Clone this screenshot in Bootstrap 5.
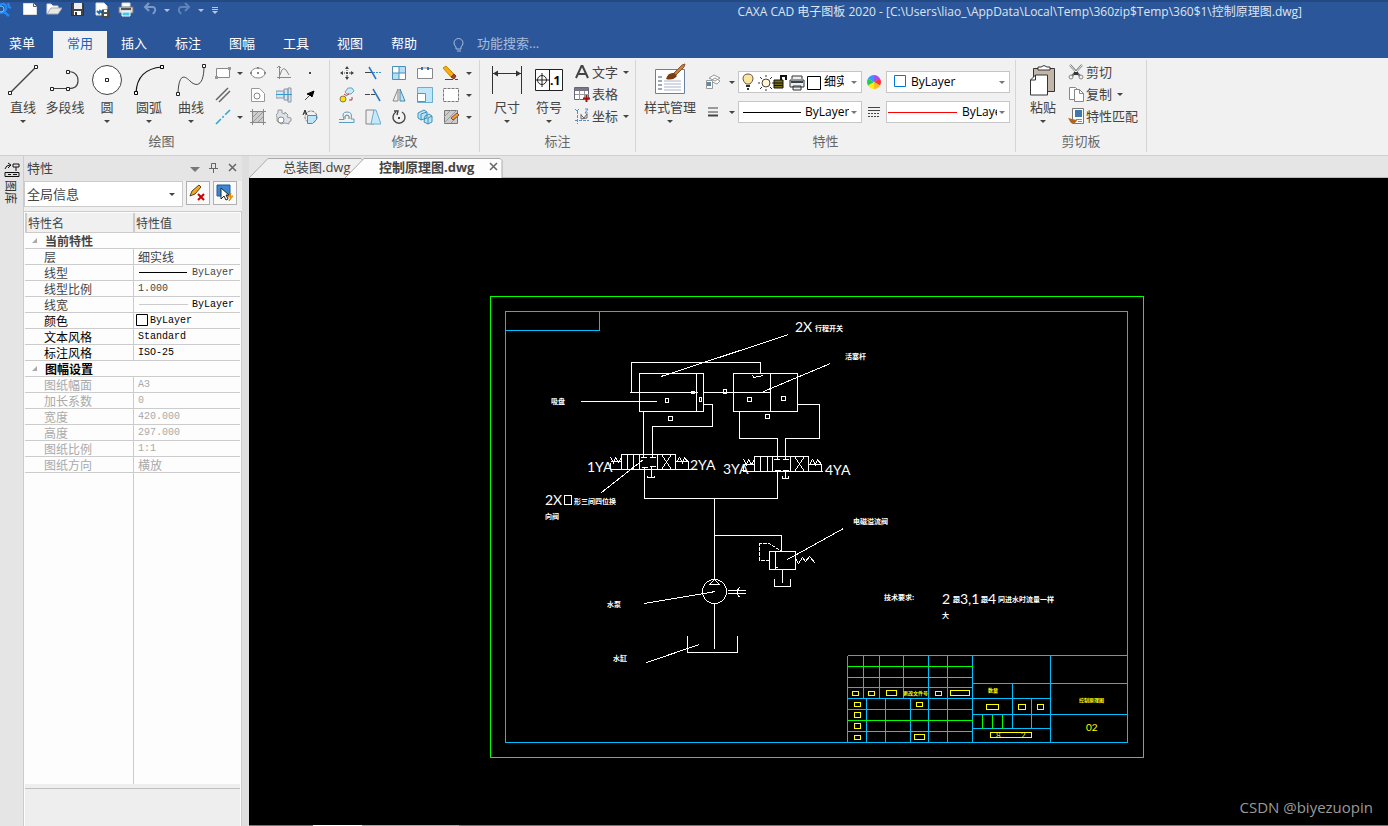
<!DOCTYPE html>
<html lang="zh-CN">
<head>
<meta charset="utf-8">
<meta name="viewport" content="width=device-width, initial-scale=1">
<title>CAXA CAD 电子图板 2020</title>
<link href="https://cdn.jsdelivr.net/npm/bootstrap@5.3.0/dist/css/bootstrap.min.css" rel="stylesheet">
<style>
body{font-family:"Open Sans","Noto Sans CJK SC",sans-serif;font-size:13px;line-height:18px;color:#444;background:#e5e5e5}
button{border:0;background:none;padding:0;color:inherit;line-height:inherit}
svg{display:block;flex:none;fill:none;stroke:#444;stroke-width:1}
.hdr{background:#2b579a;color:#fff;border-top:2px solid #244a84}
.titlebar{height:29px;padding-top:0}
.titlebar .tb{width:24px;height:16px;display:flex;justify-content:center}
.titlebar .tc{width:10px;height:16px;display:flex;justify-content:center;align-items:center}
.doc-title{font-size:12px;color:#dde5f1;margin-right:86px;height:20px;line-height:20px}
.menu-tabs{height:27px}
.menu-tabs button{width:54px;height:27px;padding-bottom:4px;line-height:20px}
.menu-tabs .first{width:44px;margin-right:9px}
.menu-tabs .on{background:#f1f1f1;color:#1565c0}
.menu-tabs .bulb{margin:0 12px 0 22px}
.search-box{background:none;border:0;color:#b9c8e0;width:140px;height:27px;padding:0 0 4px;outline:0}
.search-box::placeholder{color:#a9bbd8;opacity:1}
.ribbon{background:#f1f1f1;border-bottom:1px solid #d0d0d0;padding-top:2px;height:98px}
.grp{border-right:1px solid #d6d6d6;height:92px}
.grp-body{height:69px;padding-top:2px}
.grp-name{color:#666;text-align:center;line-height:24px}
.big{width:42px;height:66px;display:flex;flex-direction:column;align-items:center}
.big .ic{height:36px;display:flex;align-items:center}
.big .lb{line-height:18px;white-space:nowrap}
.big .car{margin-top:4px}
.car{width:0;height:0;border:3px solid transparent;border-top-color:#444;border-bottom:0;display:block;flex:none}
.grid-draw{display:grid;grid-template-columns:22px 11px 26px 26px 26px;grid-auto-rows:22px;place-items:center}
.grid-mod{display:grid;grid-template-columns:repeat(5,26px) 9px;grid-auto-rows:22px;place-items:center}
.rowbtn{height:22px;display:flex;align-items:center;white-space:nowrap;line-height:18px;padding-bottom:2px}
.rowbtn svg{margin-right:2px}
.rowbtn .car{margin-left:5px}
.prop-grid{display:grid;grid-template-columns:26px 12px 124px 24px 124px;grid-auto-rows:22px;row-gap:8px;align-items:center;justify-items:center;align-content:start;padding-top:9px}
.combo{width:124px;height:22px;background:#fff;border:1px solid #c6c6c6;display:flex;align-items:center;overflow:hidden}
.combo select,.scope select{appearance:none;border:0;background:transparent;outline:0;color:#000;padding:0;font-size:12px;min-width:0;overflow:hidden;text-overflow:clip}
.combo .car{border-top-color:#777;margin:0 4px 0 2px}
.side-strip{width:23px}
.vert{writing-mode:vertical-rl;text-orientation:sideways;font-size:12px;line-height:14px;color:#333;margin-right:4px}
.pane{width:219px;border-left:1px solid #ccc}
.pane-head{height:25px;padding:0 5px 2px 3px}
.scope-row{background:#f0f0f0;height:30px;gap:3px}
.scope{width:159px;height:26px;background:#fff;border:1px solid #ccc;display:flex;align-items:center}
.scope select{flex:1;font-size:13px;color:#444;padding-left:2px}
.sqbtn{width:24px;height:24px;border:1px solid #b0b0b0;background:#fafafa;display:flex;align-items:center;justify-content:center}
.sheet{background:#fdfdfd;border:1px solid #ccc;border-left:0;border-bottom:0;padding:1px 1px 0 1px}
.props{width:100%;table-layout:fixed;border-collapse:separate;border-spacing:0;font-family:"Noto Sans CJK SC",sans-serif;font-size:12px;line-height:15px}
.props td,.props th{padding:0;height:16px;border-bottom:1px solid #ccc;white-space:nowrap;font-weight:400}
.props th{height:20px;background:#f0f0f0;border-left:2px solid #ccc;padding-left:1px}
.props td:first-child{padding-left:19px}
.props td:nth-child(2){border-left:1px solid #ccc;padding-left:4px}
.props .sect{font-weight:700;padding-left:7px!important}
.props .sect span{display:flex;align-items:center;gap:8px}
.props .blk{color:#000}
.props .dim{color:#aaa}
.props code{font-family:"Liberation Mono",monospace;font-size:10px;color:inherit}
.props .val{display:flex;align-items:center;height:15px}
.rest{border-left:1px solid #ccc;margin-left:108px}
.pane-foot{height:42px;background:#eee;border-top:4px solid #eee}
.pane-foot div{border-top:1px solid #c0c0c0}
.gutter{width:7px;background:#dedede}
.doc-tabs{height:22px;border-bottom:1px solid #bbb}
.dtab{position:relative;height:20px;margin-top:2px;line-height:18px;padding-bottom:2px;z-index:1;text-align:left}
.dtab .shape{position:absolute;inset:0;width:100%;height:100%;z-index:-1;stroke:#aaa}
.dtab-a{width:114px;padding-left:34px}
.dtab-b{width:158px;padding-left:34px;margin-left:-18px;z-index:2;font-weight:700}
.canvas{background:#000;position:relative}
.canvas svg{width:100%;height:100%}
.wm{position:absolute;right:15px;bottom:8px;color:#9a9a9a;font-size:15px;line-height:20px}
.base-line{height:1px;background:#777}
.base-line i{display:block;height:1px}
.cad{font-family:Lato,"Noto Sans CJK SC",sans-serif;font-size:14px;fill:#fff;stroke:none}
.cad .cn{font-family:"Noto Sans CJK SC",sans-serif;font-size:7px;font-weight:700}
.cad .ylw{fill:#ff0;font-family:"Noto Sans CJK SC",sans-serif;font-size:5px;font-weight:700}
.cad .num{fill:#ff0;font-size:10px}
.cad .tiny{font-size:8px}
</style>
<script src="https://cdn.jsdelivr.net/npm/bootstrap@5.3.0/dist/js/bootstrap.bundle.min.js"></script>
</head>
<body class="vh-100 d-flex flex-column overflow-hidden">
<header class="hdr">
  <div class="titlebar d-flex">
    <svg width="18" height="16"><path d="M0 3q5-3 6 2t-6 6M3 9l6 5M8 1l1 4 2 1" stroke="#2089f5" stroke-width="2.500"/><circle cx="1" cy="7" r="3" stroke="#7cc2ff"/></svg>
    <button class="tb" aria-label="新建"><svg width="16" height="16"><path d="M1.500 1.500h10l3 3v8h-13z" fill="#fff" stroke="#ddd"/><path d="M11.500 1.500v3h3" stroke="#555"/></svg></button>
    <button class="tb" aria-label="打开"><svg width="16" height="16"><path d="M1 12V2h4l2 2h5v2" fill="#fff" stroke="#ddd"/><path d="M1 12l4-6h11l-4 6z" fill="#e8e8e8" stroke="#aaa"/></svg></button>
    <button class="tb" aria-label="保存"><svg width="16" height="16"><path d="M1.500 1.500h12v12h-12z" fill="#444" stroke="#333"/><path d="M4 1h8v6H4z" fill="#eee" stroke="none"/><path d="M4 9h7v4H4z" fill="#fff" stroke="none"/><path d="M5 10h2v3H5z" fill="#333" stroke="none"/></svg></button>
    <button class="tb" aria-label="另存为"><svg width="16" height="16"><path d="M2 1h8l3 3v9H2z" fill="#fff" stroke="#ddd"/><path d="M3 9l2 2 1-2 2 2" stroke="#1470bd" stroke-width="2"/><path d="M8 8h7v7H8z" fill="#555"/><path d="M10 8h3v2h-3zM10 12h3v2h-3z" fill="#fff" stroke="none"/></svg></button>
    <button class="tb" aria-label="打印"><svg width="16" height="16"><path d="M4 5V1h8v4" fill="#fff" stroke="#ddd"/><path d="M1 5h14v6H1z" fill="#ddd" stroke="#777"/><path d="M3 6h10v2H3z" fill="#555" stroke="none"/><path d="M4 10h8v4H4z" fill="#45c9e8" stroke="#fff"/></svg></button>
    <button class="tb" aria-label="撤销"><svg width="16" height="16"><path d="M3 5h7q4 0 3 4l-2 3M7 1L3 5l4 4" stroke="#7d9ac6" stroke-width="2"/></svg></button>
    <button class="tc" aria-label="撤销列表"><i class="car" style="border-top-color:#b5c4dc"></i></button>
    <button class="tb" aria-label="重做"><svg width="16" height="16"><path d="M13 5H6Q2 5 3 9l2 3M9 1l4 4-4 4" stroke="#6183b8" stroke-width="2"/></svg></button>
    <button class="tc" aria-label="重做列表"><i class="car" style="border-top-color:#b5c4dc"></i></button>
    <button class="tc ms-1" aria-label="自定义快速访问"><svg width="8" height="16"><path d="M1 5.500h6M1 7.500h6" stroke="#c5c5c5"/><path d="M1 9h6l-3 3z" fill="#c5c5c5" stroke="none"/></svg></button>
    <div class="doc-title ms-auto text-nowrap">CAXA CAD 电子图板 2020 - [C:\Users\liao_\AppData\Local\Temp\360zip$Temp\360$1\控制原理图.dwg]</div>
  </div>
  <nav class="menu-tabs d-flex align-items-center">
    <button class="first">菜单</button><button class="on">常用</button><button>插入</button><button>标注</button><button>图幅</button><button>工具</button><button>视图</button><button>帮助</button>
    <svg class="bulb" width="12" height="16"><path d="M3 10Q1 8 1 6a4 4 0 0 1 9 0q0 2-2 4v2H3zM4 14h4" stroke="#a9bbd8"/></svg>
    <input class="search-box" type="text" placeholder="功能搜索..." aria-label="功能搜索">
  </nav>
</header>

<div class="ribbon d-flex">
  <section class="grp" style="width:330px">
    <div class="grp-body d-flex" style="padding-left:2px">
      <button class="big"><span class="ic"><svg width="32" height="34"><path d="M3 30L29 4" stroke-width="1.500"/><path d="M1.500 28.500h3v3h-3zM27.500 2.500h3v3h-3z" fill="#fff" stroke="#222"/></svg></span><span class="lb">直线</span><i class="car"></i></button>
      <button class="big"><span class="ic"><svg width="32" height="34"><path d="M4 25.500h14M18 8.500q11 0 11 9t-11 8" stroke-width="1.200"/><path d="M1.500 24.500h3v3h-3zM17.500 24.500h3v3h-3zM17.500 7.500h3v3h-3z" fill="#fff" stroke="#222"/></svg></span><span class="lb">多段线</span></button>
      <button class="big"><span class="ic"><svg width="32" height="34"><circle cx="16" cy="17" r="14.500" fill="#fff"/><path d="M14.500 15.500h3v3h-3z" stroke="#222"/></svg></span><span class="lb">圆</span><i class="car"></i></button>
      <button class="big"><span class="ic"><svg width="32" height="34"><path d="M3 30Q4 6 29 4" stroke="#111" stroke-width="1.200"/><path d="M1.500 28.500h3v3h-3zM27.500 2.500h3v3h-3z" fill="#fff" stroke="#000"/></svg></span><span class="lb">圆弧</span><i class="car"></i></button>
      <button class="big"><span class="ic"><svg width="32" height="34"><path d="M3 30C4 8 11 14 15 18c7 7 14 4 14-15"/><path d="M1.500 29.500h3v3h-3zM27.500 1.500h3v3h-3z" fill="#fff" stroke="#222"/></svg></span><span class="lb">曲线</span><i class="car"></i></button>
      <div class="grid-draw">
        <button aria-label="矩形"><svg width="16" height="16"><path d="M1.500 3.500h13v9h-13z" fill="#fff" stroke="#888"/><path d="M0 11h3v3H0zM13 2h3v3h-3z" fill="#999" stroke="none"/></svg></button><i class="car"></i>
        <button aria-label="椭圆"><svg width="16" height="16"><ellipse cx="8" cy="8" rx="7" ry="5" fill="#fff" stroke="#888"/><path d="M7 2h2v2H7zM0 7h2v2H0zM14 7h2v2h-2zM7 7h2v2H7z" fill="#888" stroke="none"/></svg></button>
        <button aria-label="公式曲线"><svg width="16" height="16"><path d="M3.500 1v13M1 12.500h14M4 10q3-13 9 0M1 3l2-2 2 2" stroke="#888"/></svg></button>
        <button aria-label="点"><svg width="16" height="16"><path d="M7 7h2v2H7z" fill="#445" stroke="none"/></svg></button>
        <button aria-label="平行线"><svg width="16" height="16"><path d="M1 13L13 1M4 15L15 4" stroke="#666" stroke-width="1.500"/></svg></button><i></i>
        <button aria-label="孔"><svg width="16" height="16"><path d="M1.500 1.500h8l5 5v8h-13z" fill="#fff" stroke="#999"/><circle cx="7" cy="9" r="3" stroke="#888"/></svg></button>
        <button aria-label="轴"><svg width="16" height="16"><path d="M0 4h8v7H0zM8 2h4v11H8zM12 1h3v14h-3z" fill="#cfe6f8" stroke="#8a96a4"/><path d="M0 7.500h16" stroke="#39c"/></svg></button>
        <button aria-label="箭头"><svg width="16" height="16"><path d="M3 13l5-5"/><path d="M12 4l-2 6-2-2-3-1z" fill="#000" stroke="#000"/></svg></button>
        <button aria-label="中心线"><svg width="16" height="16"><path d="M1 15L15 1" stroke="#26a6d8" stroke-width="1.500" stroke-dasharray="7 2 2 2"/></svg></button><i class="car"></i>
        <button aria-label="剖面线"><svg width="16" height="16"><path d="M3 3h10v10H3z" fill="#ccc" stroke="none"/><path d="M2.500 0v16M13.500 0v16M0 2.500h16M0 13.500h16" stroke="#888"/><path d="M3 8l5-5M3 13L13 3M8 13l5-5" stroke="#999"/></svg></button>
        <button aria-label="齿轮"><svg width="16" height="16"><path d="M2 1h4v3l3 1V3l3 3-1 2 4 1v3l-2 1v2l-4-1-4 1-4-3V8L0 6l2-2z" fill="#dce2ea" stroke="#999"/><circle cx="5" cy="11" r="3" fill="#fff" stroke="#888"/></svg></button>
        <button aria-label="局部放大"><svg width="16" height="16"><circle cx="9" cy="8" r="6" stroke="#777" stroke-dasharray="3 1"/><path d="M5.500 6.500h9v4l-4 4h-5z" fill="#bde4f7" stroke="#58a"/><path d="M1 6l2-5 2 5M2 4h2" stroke="#222"/></svg></button>
      </div>
    </div>
    <div class="grp-name" style="margin-right:6px">绘图</div>
  </section>

  <section class="grp" style="width:150px">
    <div class="grp-body ps-1">
      <div class="grid-mod">
        <button aria-label="平移"><svg width="16" height="16"><path d="M8 2v4M8 10v4M2 8h4M10 8h4" stroke-dasharray="2 1"/><path d="M8 1l2 3H6zM8 15l2-3H6zM1 8l3-2v4zM15 8l-3-2v4zM7 7h2v2H7z" fill="#444" stroke="none"/></svg></button>
        <button aria-label="裁剪"><svg width="16" height="16"><path d="M0 7.500h7" /><path d="M8 7.500h8" stroke="#3d8fd1" stroke-dasharray="2 1"/><path d="M4 2l7 12" stroke="#2477c9" stroke-width="1.500"/></svg></button>
        <button aria-label="阵列"><svg width="16" height="16"><path d="M1.500 1.500h13v13h-13z" fill="#fff" stroke="#4b8fb5"/><path d="M8 2h6v6H8zM2 8h6v6H2z" fill="#b4dff5" stroke="none"/><path d="M8 1v14M1 8h14" stroke="#4b8fb5"/></svg></button>
        <button aria-label="打断"><svg width="16" height="16"><path d="M4 3.500H.500v10h15v-10H12M6 3h4" stroke="#888" fill="#fff"/><path d="M5 2v3M11 2v3" stroke="#2477c9" stroke-width="2"/></svg></button>
        <button aria-label="删除"><svg width="16" height="16"><path d="M0 3l3-2 8 8-3 3z" fill="#f5aa18" stroke="#c80"/><path d="M8 12l3-3 2 2-2 3z" fill="#a42" stroke="#733"/><path d="M2 14.500h13" stroke="#922" stroke-dasharray="8 2"/></svg></button><i class="car"></i>
        <button aria-label="平移复制"><svg width="16" height="16"><circle cx="4" cy="12" r="3" fill="#fbe000" stroke="#875"/><path d="M6 5l3-4h4l2 3-3 3H8z" fill="#cae8f8" stroke="#6aa3c0"/><path d="M5 7q2 3 5 0M10 13h3v-3" stroke="#b33"/></svg></button>
        <button aria-label="延伸"><svg width="16" height="16"><path d="M0 7.500h10" stroke-dasharray="5 1"/><path d="M8 2l7 12" stroke="#2477c9" stroke-width="1.500"/></svg></button>
        <button aria-label="镜像"><svg width="16" height="16"><path d="M7 2v12H2z" fill="#eee" stroke="#888"/><path d="M9 2v12h5z" fill="#bfe3f7" stroke="#48a"/></svg></button>
        <button aria-label="缩放"><svg width="16" height="16"><path d="M.500.500h15v15H.500z" fill="#bfe6fa" stroke="#6aafcf"/><path d="M.500 6.500h8v8h-8z" fill="#fff" stroke="#888"/></svg></button>
        <button aria-label="拉伸"><svg width="16" height="16"><path d="M.500 1.500h15v13H.500z" fill="#fff" stroke="#777" stroke-dasharray="3 1"/></svg></button><i class="car"></i>
        <button aria-label="偏移"><svg width="16" height="16"><path d="M0 10.500h5Q2 3 8 3t4 7h3M0 13.500h15V10" stroke="#5a9cc0"/><path d="M6 10Q5 6 8 6t2 4" stroke="#777"/></svg></button>
        <button aria-label="倾斜"><svg width="16" height="16"><path d="M1 1h8v14H1z" fill="#eee" stroke="#888"/><path d="M9 1h2l5 14H6z" fill="#c5e8fa" stroke="#6aafcf"/></svg></button>
        <button aria-label="旋转"><svg width="16" height="16"><path d="M11 3a6 6 0 1 1-6 0M3 2l4 0-1 4" stroke-width="1.400"/><path d="M7 8h2v2H7z" fill="#444" stroke="none"/></svg></button>
        <button aria-label="分解"><svg width="16" height="16"><path d="M1 4l6-3 3 2v6l-6 2-3-2zM8 7l4-2 3 2v6l-4 2-4-2z" fill="#b9e4f8" stroke="#3f8fb8"/><path d="M4 11V5l6-2M11 15V9l4-2" stroke="#3f8fb8"/></svg></button>
        <button aria-label="编辑填充"><svg width="16" height="16"><path d="M1.500 1.500h13v13h-13z" fill="#ccc" stroke="#777"/><path d="M1 8l7-7M1 14L14 1M8 14l6-6" stroke="#999"/><path d="M8 9l6-5 2 2-6 5z" fill="#eca52b" stroke="#944"/></svg></button><i class="car"></i>
      </div>
    </div>
    <div class="grp-name">修改</div>
  </section>

  <section class="grp" style="width:156px">
    <div class="grp-body d-flex" style="padding-left:6px">
      <button class="big"><span class="ic"><svg width="32" height="34"><path d="M1.500 3v28M30.500 3v28M2 10.500h28" stroke="#333"/><path d="M2 10.500l5-3v6zM30 10.500l-5-3v6z" fill="#333" stroke="none"/></svg></span><span class="lb">尺寸</span><i class="car"></i></button>
      <button class="big"><span class="ic"><svg width="30" height="34"><path d="M1.500 6.500h27v21h-27zM15.500 6v22" fill="#fff" stroke="#222"/><circle cx="8" cy="17" r="4.500" stroke="#222"/><path d="M8 10v14M2 17h13" stroke="#222"/><text x="16" y="22" font-size="12" font-weight="700" fill="#000" stroke="none">.1</text></svg></span><span class="lb">符号</span><i class="car"></i></button>
      <div class="ps-1">
        <button class="rowbtn"><svg width="16" height="16"><path d="M2 14L7.500 2h1L14 14M4 10h8" stroke="#444" stroke-width="2"/></svg>文字<i class="car"></i></button>
        <button class="rowbtn"><svg width="16" height="16"><path d="M.500 1.500h14v12H.500z" fill="#fff" stroke="#667"/><path d="M1 2h13v3H1z" fill="#778" stroke="none"/><path d="M1 8.500h14M5.500 5v9M10.500 5v9" stroke="#999"/><path d="M12.500 9v7M9 12.500h7" stroke="#a11" stroke-width="2"/></svg>表格</button>
        <button class="rowbtn"><svg width="16" height="16"><path d="M3.500 3v13M1 12.500h14" stroke="#5a8fc0" stroke-dasharray="3 1"/><path d="M1 1l2 2 2-2M11 1h3l-3 4h3" stroke="#5a8fc0"/><path d="M7 6v5l6-1V6M7 7l3 3 3-4" stroke="#666"/></svg>坐标<i class="car"></i></button>
      </div>
    </div>
    <div class="grp-name">标注</div>
  </section>

  <section class="grp" style="width:380px">
    <div class="grp-body d-flex ps-1">
      <button class="big" style="width:60px"><span class="ic"><svg width="32" height="34"><path d="M1.500 6.500h29v24h-29z" fill="#fff" stroke="#68829c"/><path d="M4 14h4M4 18h4M4 22h4M4 26h4" stroke="#357"/><path d="M10 18h17M10 21h17M10 24h17M10 27h17" stroke="#aab4c8"/><path d="M12 16q2-7 8-6l3 3q-4 5-11 3z" fill="#7b3d12" stroke="none"/><path d="M20 10l8-8 3-1-1 3-8 8z" fill="#c98235" stroke="#853"/></svg></span><span class="lb">样式管理</span><i class="car"></i></button>
      <div class="prop-grid">
        <button aria-label="图层"><svg width="16" height="16"><path d="M4 4l5-3 6 3-5 3zM5 7l5-3 5 3-3 3z" fill="#fff" stroke="#999"/><path d="M1.500 6.500h6v8h-6z" fill="#fff" stroke="#999"/><path d="M2 8h4v4H2z" fill="#5b8aaa" stroke="none"/></svg></button><i class="car"></i>
        <div class="combo">
          <svg width="94" height="20"><path d="M7 12q-3-3-3-5 0-5 5-5t5 5q0 2-3 5z" fill="#fbe69c" stroke="#655"/><path d="M7 14h4M8 17h2" stroke="#333" stroke-width="2"/><circle cx="27" cy="11" r="4" fill="#fff6d0"/><path d="M27 3v2M27 17v2M19 11h2M33 11h2M21 5l2 2M33 5l-2 2M21 17l2-2M33 17l-2-2" stroke="#333"/><path d="M35 8h9v8h-9zM35 11h9M35 13.500h9" fill="#777010" stroke="#111"/><path d="M42 8V4h5v4" stroke="#111" stroke-width="2"/><path d="M53 7V4h10v3M51 8h14v7H51zM54 14h8v4h-8z" fill="#eee" stroke="#333"/><path d="M52 10h12" stroke="#345" stroke-width="2"/><path d="M68.500 4.500h13v13h-13z" fill="#fff" stroke="#000"/></svg>
          <select class="flex-fill" aria-label="图层选择" style="margin-left:-9px;width:20px"><option>细实线</option></select><i class="car" style="margin-left:7px"></i>
        </div>
        <button aria-label="颜色"><svg width="16" height="16" style="stroke:none"><path d="M8 8V1a7 7 0 0 1 6 4z" fill="#a050f0"/><path d="M8 8l6-3.500a7 7 0 0 1 0 7z" fill="#f33"/><path d="M8 8l6 3.500A7 7 0 0 1 8 15z" fill="#fb2"/><path d="M8 8v7a7 7 0 0 1-6-3.500z" fill="#fe0"/><path d="M8 8l-6 3.500a7 7 0 0 1 0-7z" fill="#2c5"/><path d="M8 8L2 4.500A7 7 0 0 1 8 1z" fill="#39f"/></svg></button>
        <div class="combo"><svg class="ms-1" width="20" height="16"><path d="M3.500 1.500h11v11h-11z" fill="#fff" stroke="#0078d7"/></svg><select class="flex-fill" aria-label="颜色选择"><option>ByLayer</option></select><i class="car"></i></div>
        <button aria-label="线型"><svg width="12" height="12"><path d="M1 2h10M1 6h10" stroke-width="1"/><path d="M1 9.500h10" stroke-width="2"/></svg></button><i class="car"></i>
        <div class="combo"><svg class="ms-1 me-1" width="58" height="4"><path d="M0 2.500h58" stroke="#000"/></svg><select class="flex-fill" aria-label="线型选择"><option>ByLayer</option></select><i class="car"></i></div>
        <button aria-label="线宽"><svg width="14" height="14"><path d="M1 2.500h12M1 5.500h12" /><path d="M1 8.500h12M1 11.500h12" stroke-dasharray="2 1"/></svg></button>
        <div class="combo"><svg class="me-1" width="71" height="4"><path d="M1 2.500h69" stroke="red"/></svg><select class="flex-fill" aria-label="线宽选择"><option>ByLayer</option></select><i class="car"></i></div>
      </div>
    </div>
    <div class="grp-name">特性</div>
  </section>

  <section class="grp" style="width:131px">
    <div class="grp-body d-flex" style="padding-left:6px">
      <button class="big"><span class="ic"><svg width="30" height="34"><path d="M5.500 5.500h21v23h-21z" fill="#c2b6a8" stroke="#333"/><path d="M10 7V4h3q3-3 6 0h3v3z" fill="#fff" stroke="#333"/><path d="M2.500 17l5-5h12v20h-17z" fill="#fff" stroke="#333"/><path d="M2.500 17h5v-5" stroke="#333"/></svg></span><span class="lb">粘贴</span><i class="car"></i></button>
      <div class="ps-1">
        <button class="rowbtn"><svg width="16" height="16"><path d="M2 1l10 11M14 1L4 12" stroke="#666" stroke-width="2"/><path d="M2 1l6 7M14 1L8 8" stroke="#fff"/><circle cx="3" cy="13" r="2" stroke="#888"/><circle cx="13" cy="13" r="2" stroke="#888"/><path d="M6 8h4v3H6z" fill="#333" stroke="none"/></svg>剪切</button>
        <button class="rowbtn"><svg width="16" height="16"><path d="M1.500 1.500h6l2 2v10h-8z" fill="#fff" stroke="#888"/><path d="M6.500 3.500h5l4 4v8h-9z" fill="#fff" stroke="#888"/><path d="M11.500 3.500v4h4" stroke="#888"/></svg>复制<i class="car"></i></button>
        <button class="rowbtn"><svg width="16" height="16"><path d="M4.500.500h11v15h-11z" fill="#fff" stroke="#777"/><path d="M7 2h7v7H7z" fill="#3f78ad" stroke="none"/><path d="M8 11.500h6M10 13.500h4" stroke="#888"/><path d="M0 10l4 1 5 1q-1 4-6 3z" fill="#b4651c" stroke="none"/></svg>特性匹配</button>
      </div>
    </div>
    <div class="grp-name">剪切板</div>
  </section>
</div>

<main class="d-flex flex-fill" style="min-height:0">
  <div class="side-strip pt-1 d-flex flex-column align-items-center">
    <svg width="16" height="20"><path d="M1 9q1-4 5-4M4 3l3 2-3 3M9 4h6v3H9zM12 7v4" stroke="#111"/><path d="M1 12.500h14v4H1z" fill="#ddd" stroke="#111"/><path d="M4 14.500h3M9 14.500h4" stroke="#111"/></svg>
    <button class="vert">图库</button>
  </div>
  <aside class="pane d-flex flex-column">
    <div class="pane-head d-flex align-items-center"><span class="me-auto">特性</span>
      <button aria-label="窗格菜单" class="me-2"><svg width="10" height="10"><path d="M0 4h10L5 9z" fill="#777" stroke="none"/></svg></button>
      <button aria-label="固定" class="me-2"><svg width="12" height="12"><path d="M3.500 6V1.500h4V6M1 6.500h9M5.500 7v4M7.500 1v5" stroke="#666"/></svg></button>
      <button aria-label="关闭窗格"><svg width="9" height="9"><path d="M1 1l7 7M8 1L1 8" stroke="#666" stroke-width="1.500"/></svg></button>
    </div>
    <div class="scope-row d-flex">
      <div class="scope"><select aria-label="选择对象"><option>全局信息</option></select><i class="car" style="margin-right:7px"></i></div>
      <button class="sqbtn" aria-label="清除选择"><svg width="18" height="18"><path d="M1 12l2-5 7-6 2 2-6 7z" fill="#f2ab25" stroke="#542"/><path d="M9 10l6 6M15 10l-6 6" stroke="#c00" stroke-width="2"/></svg></button>
      <button class="sqbtn" aria-label="快速选择"><svg width="18" height="18"><path d="M1 1h13v11H1z" fill="#3c85cf" stroke="#1e5c9d"/><path d="M5 4v11l3-3 2 4 2-1-2-4h3z" fill="#fff" stroke="#222"/><path d="M15 9l-3 4h3l-2 4 4-5h-3z" fill="#fb2" stroke="#d80"/></svg></button>
    </div>
    <div class="sheet flex-fill d-flex flex-column">
      <table class="props">
        <colgroup><col style="width:108px"><col></colgroup>
        <thead><tr><th>特性名</th><th>特性值</th></tr></thead>
        <tbody>
          <tr><td class="sect" colspan="2"><span><svg width="5" height="5"><path d="M5 0v5H0z" fill="#aaa" stroke="none"/></svg>当前特性</span></td></tr>
          <tr><td>层</td><td>细实线</td></tr>
          <tr><td>线型</td><td><div class="val"><svg width="54" height="3"><path d="M1 1.500h48" stroke="#000"/></svg><code>ByLayer</code></div></td></tr>
          <tr><td>线型比例</td><td><div class="val"><code>1.000</code></div></td></tr>
          <tr><td>线宽</td><td><div class="val"><svg width="54" height="3"><path d="M1 1.500h49" stroke="#ccc"/></svg><code class="blk">ByLayer</code></div></td></tr>
          <tr class="blk"><td>颜色</td><td><div class="val"><svg style="margin-left:-2px" width="14" height="13"><path d="M.500.500h11v11H.500z" fill="#fff" stroke="#000"/></svg><code>ByLayer</code></div></td></tr>
          <tr class="blk"><td>文本风格</td><td><div class="val"><code>Standard</code></div></td></tr>
          <tr class="blk"><td>标注风格</td><td><div class="val"><code>ISO-25</code></div></td></tr>
          <tr class="blk"><td class="sect" colspan="2"><span><svg width="5" height="5"><path d="M5 0v5H0z" fill="#aaa" stroke="none"/></svg>图幅设置</span></td></tr>
          <tr class="dim"><td>图纸幅面</td><td><div class="val"><code>A3</code></div></td></tr>
          <tr class="dim"><td>加长系数</td><td><div class="val"><code>0</code></div></td></tr>
          <tr class="dim"><td>宽度</td><td><div class="val"><code>420.000</code></div></td></tr>
          <tr class="dim"><td>高度</td><td><div class="val"><code>297.000</code></div></td></tr>
          <tr class="dim"><td>图纸比例</td><td><div class="val"><code>1:1</code></div></td></tr>
          <tr class="dim"><td>图纸方向</td><td>横放</td></tr>
        </tbody>
      </table>
      <div class="rest flex-fill"></div>
      <div class="pane-foot"><div></div></div>
    </div>
  </aside>
  <div class="gutter"></div>
  <section class="flex-fill d-flex flex-column" style="min-width:0">
    <div class="doc-tabs d-flex">
      <button class="dtab dtab-a"><svg class="shape" viewBox="0 0 114 20" preserveAspectRatio="none"><path d="M0 20L19 .500h93l2 2V20" fill="#f0f0f0"/></svg>总装图.dwg</button>
      <button class="dtab dtab-b"><svg class="shape" viewBox="0 0 158 20" preserveAspectRatio="none"><path d="M0 20L19 .500h136l2 2V20" fill="#fdfdfd"/></svg><span class="d-flex align-items-center">控制原理图.dwg<svg class="ms-auto me-1" width="10" height="10"><path d="M1 1l7 7M8 1L1 8" stroke="#666" stroke-width="1.500"/></svg></span></button>
    </div>
    <div class="canvas flex-fill" style="min-height:0">
      <svg viewBox="249 178 1139 647" role="img" aria-label="控制原理图">
        <g transform="translate(.5 .5)" shape-rendering="crispEdges">
          <path stroke="#0f0" d="M490 296H1143V757H490z"/>
          <path stroke="#00bfff" d="M505 311H1127V742H505zM505 330H599V311"/>
          <g stroke="#fff">
            <path d="M788 334L661 376M629 392H697M631 392V362H760V373M639 373H703V411H639zM696 373V411M703 392H770M733 373H797V411H733zM770 373V411M830 363L763 391M763 375l-10 2M580 401H656"/>
            <path d="M661 375h3M690 391h4M690 393h4M752 375l3 3"/>
            <path d="M665 398h3v4h-3zM699 397h2v4h-2zM723 389h3v4h-3zM747 397h4v4h-4zM781 396h4v4h-4zM668 416h4v4h-4zM765 414h4v4h-4z"/>
            <path d="M643 411V457M703 404H712V426H652V457M797 404H819V438H785V459M739 411V438H777V459"/>
            <path d="M621 454H675V469H621zM627 454V469M633 454V469M639 454V469M657 454V469M640 457h6M649 457h6M641 467h6M649 466h6M661 454l10 15M671 454l-10 15M610 469H696M610 462V469M621 461h-11M675 461h13M688 461V469M610 457l3 5 2-5 3 5 3-5M676 462l3-5 3 5 2-5 4 5"/>
            <path d="M754 456H808V471H754zM760 456V471M767 456V471M772 456V471M790 456V471M773 459h6M782 459h6M774 470h6M782 470h6M794 456l10 15M804 456l-10 15M743 471H822M743 464V471M754 464h-11M808 464h13M821 464V471M743 459l3 5 2-5 3 5 3-5M809 464l3-5 3 5 2-5 4 5"/>
            <path d="M651 466V477M647 475V477H654V475M785 470V478M782 475V478H788V475M644 467V498H777V471M714 498V579M714 535H781V551M643 459L601 492"/>
            <circle cx="714" cy="591" r="12"/>
            <path d="M709 584h10l-5-5zM727 590H745M727 593H745M739 587q-4 4 0 10M714 603V648M687 635V652H737V635M644 603L715 591M646 662L699 644"/>
            <path d="M769 551H795V569H769zM775 551V568M774 567h3M843 528L787 559M782 569V582M774 578V586H790V578M795 558l3 5 4-6 3 4 4-5 6 7"/>
            <path stroke-dasharray="4 1" d="M769 560H759V543H769L781 551"/>
          </g>
          <path stroke="#00bfff" d="M847 655V742M847 655H972V742M863 655V698M879 655V698M903 655V698M928 655V742M947 655V742M847 687H972M847 698H972M847 709H972M866 698V742M885 698V742M910 698V742M972 655H1127M1050 655V742M972 683H1127M972 698H1050M972 714H1127M972 728H1050M1012 683V728M1031 698V728"/>
          <path stroke="#0f0" d="M847 666H972M847 677H972M847 720H972M847 731H972M982 714V728M992 714V728M1002 714V728"/>
          <path stroke="#ff0" d="M852 691h6v4h-6zM868 691h6v4h-6zM886 690h10v5h-10zM935 691h6v4h-6zM950 690h19v5h-19zM854 702h6v4h-6zM916 702h6v4h-6zM854 712h6v5h-6zM854 723h6v5h-6zM854 735h6v4h-6zM914 734h10v5h-10zM986 704h12v5h-12zM1018 704h7v5h-7zM1037 704h6v5h-6zM990 732h41v5h-41z"/>
          <path stroke="#fff" d="M564 495h7v9h-7z"/>
        </g>
        <g class="cad">
          <text x="795" y="332">2X</text><text class="cn" x="815" y="331">行程开关</text>
          <text class="cn" x="845" y="359">活塞杆</text>
          <text class="cn" x="551" y="404">吸盘</text>
          <text x="587" y="472">1YA</text><text x="690" y="470">2YA</text><text x="723" y="474">3YA</text><text x="825" y="475">4YA</text>
          <text x="545" y="505">2X</text><text class="cn" x="574" y="504">形三间四位换</text><text class="cn" x="545" y="519">向阀</text>
          <text class="cn" x="853" y="524">电磁溢流阀</text>
          <text class="cn" x="607" y="607">水泵</text><text class="cn" x="613" y="661">水缸</text>
          <text class="cn" x="884" y="600">技术要求:</text>
          <text x="942" y="604">2</text><text class="cn" x="953" y="602">跟</text><text x="960" y="604">3,1</text><text class="cn" x="981" y="602">跟</text><text x="988" y="604">4</text><text class="cn" x="998" y="602">同进水时流量一样</text><text class="cn" x="942" y="618">大</text>
          <text class="ylw" x="903" y="695">更改文件号</text><text class="ylw" x="988" y="692">数量</text><text class="ylw" x="1079" y="702">控制原理图</text>
          <text class="num" x="1086" y="731">02</text><text class="num tiny" x="996" y="738">8</text><text class="num tiny" x="1021" y="738">2</text>
        </g>
      </svg>
      <div class="wm">CSDN @biyezuopin</div>
    </div>
    <div class="base-line d-flex"><i style="width:64px"></i><i class="bg-white" style="width:49px"></i><i style="width:97px;background:#aaa"></i></div>
  </section>
</main>
</body>
</html>
